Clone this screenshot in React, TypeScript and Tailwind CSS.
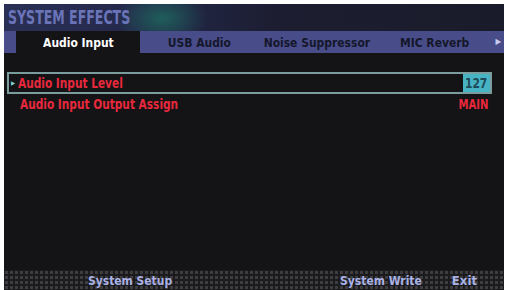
import React from "react";

const tabs = [
  { label: "Audio Input", active: true },
  { label: "USB Audio", active: false },
  { label: "Noise Suppressor", active: false },
  { label: "MIC Reverb", active: false },
];

const font = {
  fontFamily: '"DejaVu Sans Condensed", "Liberation Sans", sans-serif',
};

export default function App() {
  return (
    <div
      className="w-[509px] h-[290px] bg-white pt-[4px] pl-[4px] pr-[5px] overflow-hidden"
      style={font}
    >
      <div className="flex flex-col h-full bg-[#141416]">
        {/* Header */}
        <div className="h-[27px] flex items-center px-[4px] bg-[radial-gradient(ellipse_45px_28px_at_158px_14px,#1f5e5a_0%,transparent_100%),linear-gradient(90deg,#2a2f55_0%,#23284a_30%,#1c1d30_55%,#1a1b2a_100%)]">
          <span className="inline-block origin-left scale-x-[0.82] scale-y-[1.1] text-[17px] font-bold text-[#6a74b8] leading-none whitespace-nowrap">
            SYSTEM EFFECTS
          </span>
        </div>

        {/* Tabs */}
        <div className="h-[22px] flex bg-[#484d8a] text-[13px] font-bold leading-none">
          <div className="w-[12px]" />
          {tabs.map((t) => (
            <div
              key={t.label}
              className={`flex items-center justify-center ${
                t.active
                  ? "w-[124px] bg-[#141416] text-white"
                  : "w-[118px] text-[#15172a]"
              }`}
            >
              <span className="inline-block scale-x-[0.92] whitespace-nowrap">
                {t.label}
              </span>
            </div>
          ))}
          <div className="flex-1 flex items-center justify-end pr-[3px] text-[#c8ccf0] text-[8px]">
            ▶
          </div>
        </div>

        {/* Parameters */}
        <div className="flex-1 pt-[19px] pl-[3px] pr-[12px] text-[14px] font-bold text-[#e8283c] leading-none">
          <div className="h-[22px] flex items-center border-2 border-[#7a9c9c] pl-[2px]">
            <span className="text-[6px] text-[#7fd0d0] mr-[3px]">▶</span>
            <span className="flex-1">
              <span className="inline-block origin-left scale-x-[0.84] whitespace-nowrap">
                Audio Input Level
              </span>
            </span>
            <span className="h-full flex items-center justify-center w-[27px] bg-[#47b4c4] text-[#1d4a58]">
              <span className="inline-block scale-x-[0.85]">127</span>
            </span>
          </div>
          <div className="h-[19px] flex items-center pl-[13px] pr-[3px]">
            <span className="flex-1">
              <span className="inline-block origin-left scale-x-[0.84] whitespace-nowrap">
                Audio Input Output Assign
              </span>
            </span>
            <span className="inline-block origin-right scale-x-[0.8]">MAIN</span>
          </div>
        </div>

        {/* Footer */}
        <div className="h-[20px] flex items-center text-[13px] font-bold text-[#aab2e6] leading-none bg-[#1b1b1d] bg-[radial-gradient(circle,#3e3e42_1.4px,transparent_1.8px)] bg-[length:5px_5px]">
          <span className="ml-[84px] inline-block origin-left scale-x-[0.92] whitespace-nowrap">
            System Setup
          </span>
          <span className="ml-auto inline-block origin-right scale-x-[0.92] whitespace-nowrap">
            System Write
          </span>
          <span className="ml-[30px] mr-[27px]">Exit</span>
        </div>
      </div>
    </div>
  );
}
